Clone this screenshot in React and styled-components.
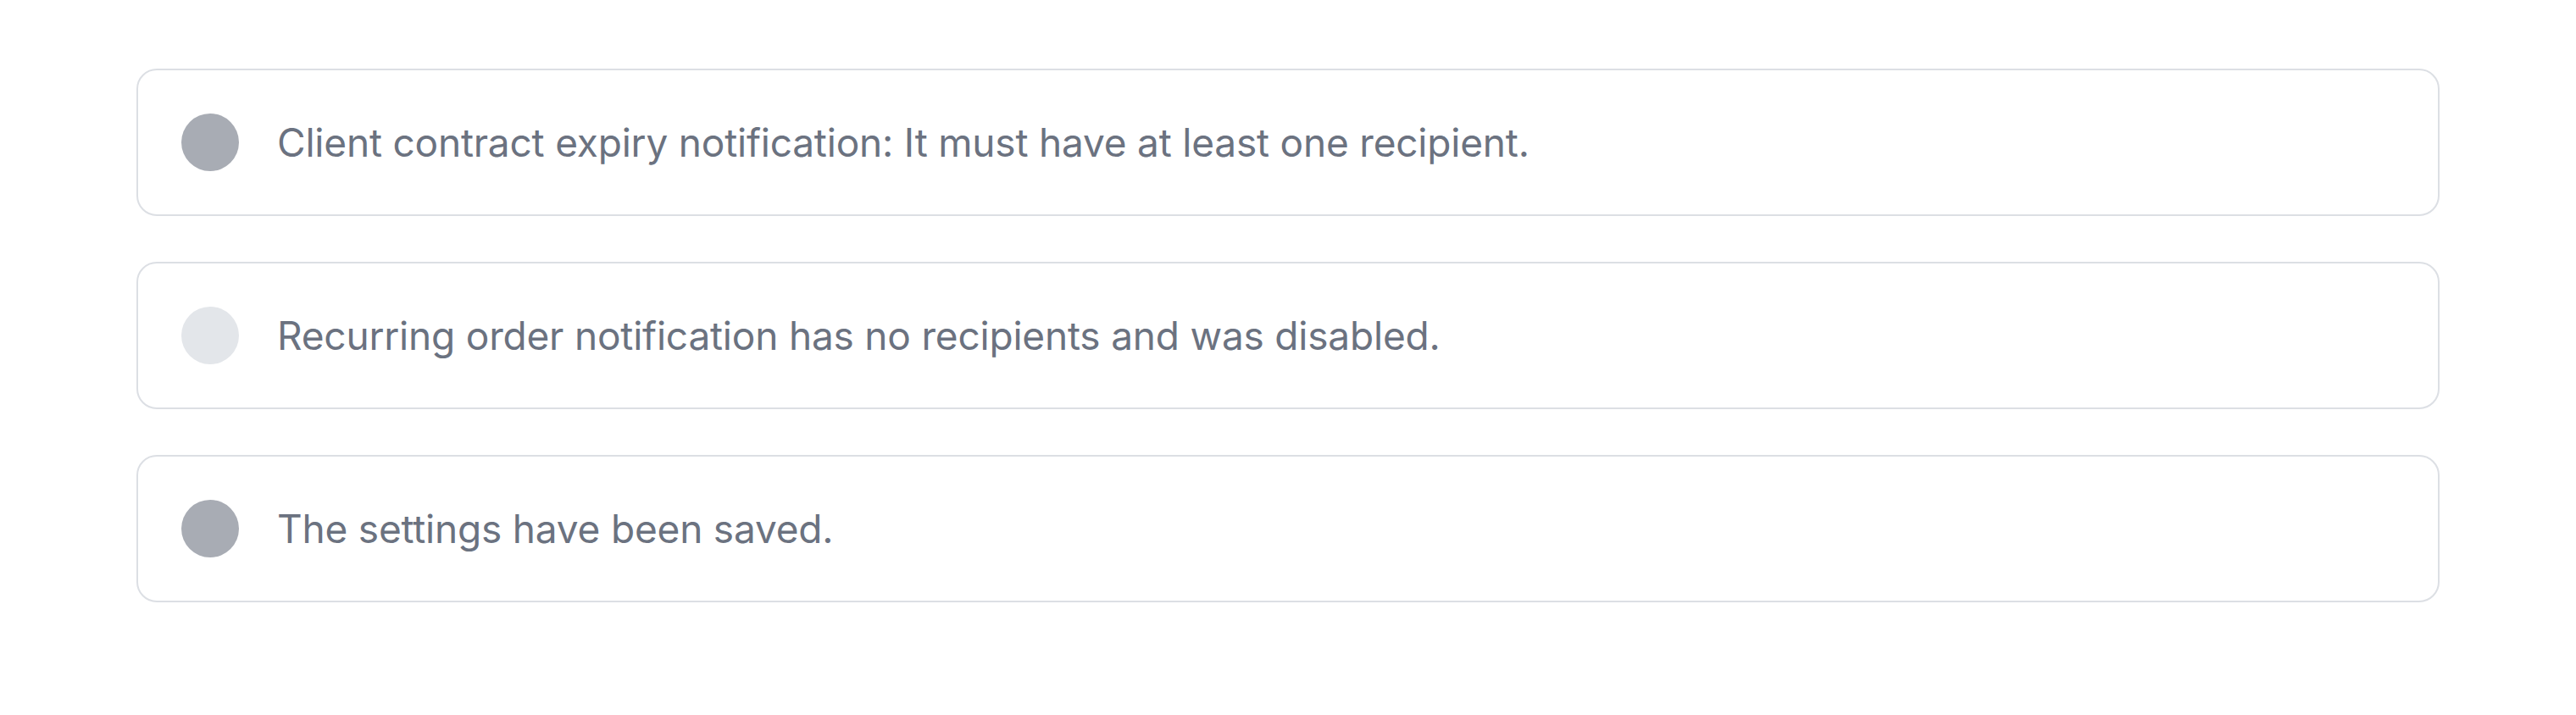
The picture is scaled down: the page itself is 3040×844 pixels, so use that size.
import styled, { createGlobalStyle } from 'styled-components'

const GlobalStyle = createGlobalStyle`
  html, body {
    margin: 0;
    padding: 0;
    background: #ffffff;
  }

  body {
    font-family: Inter, "Noto Sans", sans-serif;
  }
`

const List = styled.div`
  display: flex;
  flex-direction: column;
  gap: 54px;
  padding: 81px 161px;
`

const Card = styled.div`
  display: flex;
  align-items: center;
  gap: 45px;
  height: 174px;
  box-sizing: border-box;
  padding: 0 51px;
  border: 2px solid #dcdfe4;
  border-radius: 24px;
  background: #ffffff;
`

const Dot = styled.span`
  flex: none;
  width: 68px;
  height: 68px;
  border-radius: 50%;
  background: ${props => (props.$light ? '#e3e6ea' : '#a8acb4')};
`

const Message = styled.div`
  font-size: 46px;
  color: #6b7280;
  letter-spacing: -0.2px;
  white-space: nowrap;
`

const messages = [
  { text: 'Client contract expiry notification: It must have at least one recipient.' },
  { text: 'Recurring order notification has no recipients and was disabled.', light: true },
  { text: 'The settings have been saved.' }
]

const App = () => {
  return (
    <>
      <GlobalStyle />
      <List>
        {messages.map(m => (
          <Card key={m.text}>
            <Dot $light={m.light} />
            <Message>{m.text}</Message>
          </Card>
        ))}
      </List>
    </>
  )
}

export default App
